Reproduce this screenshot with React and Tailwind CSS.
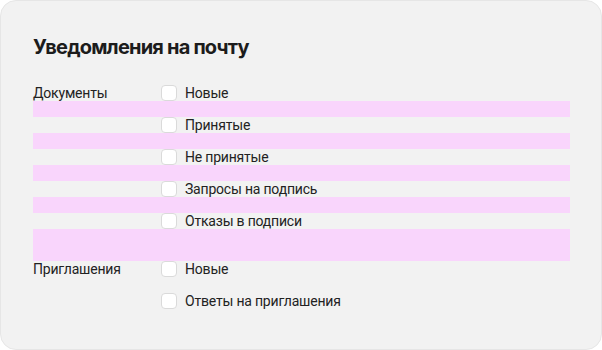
import React from "react";

function Row({ label, text }) {
  return (
    <div className="flex h-4 items-center tracking-[-0.2px]">
      <div className="w-[128px] text-[14px] leading-4 text-[#222]">{label}</div>
      <div className="h-4 w-4 shrink-0 rounded-[4px] border border-[#dadada] bg-white" />
      <div className="ml-2 text-[14px] leading-4 text-[#222]">{text}</div>
    </div>
  );
}

function Pink({ h }) {
  return <div className={`${h} bg-[#f9d5fc]`} />;
}

export default function App() {
  return (
    <div
      className="h-[350px] w-[602px] bg-white"
      style={{ fontFamily: "Roboto, 'Noto Sans', sans-serif" }}
    >
      <div className="h-full w-full rounded-[16px] border border-[#e6e6e6] bg-[#f2f2f2] pl-[32px] pr-[31px] pt-[32px]">
        <h1
          className="text-[20px] font-bold leading-7 text-[#1c1c1c]"
          style={{ fontFamily: "Inter, sans-serif", letterSpacing: "-0.8px" }}
        >
          Уведомления на почту
        </h1>
        <div className="mt-6 flex flex-col">
          <Row label="Документы" text="Новые" />
          <Pink h="h-4" />
          <Row label="" text="Принятые" />
          <Pink h="h-4" />
          <Row label="" text="Не принятые" />
          <Pink h="h-4" />
          <Row label="" text="Запросы на подпись" />
          <Pink h="h-4" />
          <Row label="" text="Отказы в подписи" />
          <Pink h="h-8" />
          <Row label="Приглашения" text="Новые" />
          <div className="h-4" />
          <Row label="" text="Ответы на приглашения" />
        </div>
      </div>
    </div>
  );
}
